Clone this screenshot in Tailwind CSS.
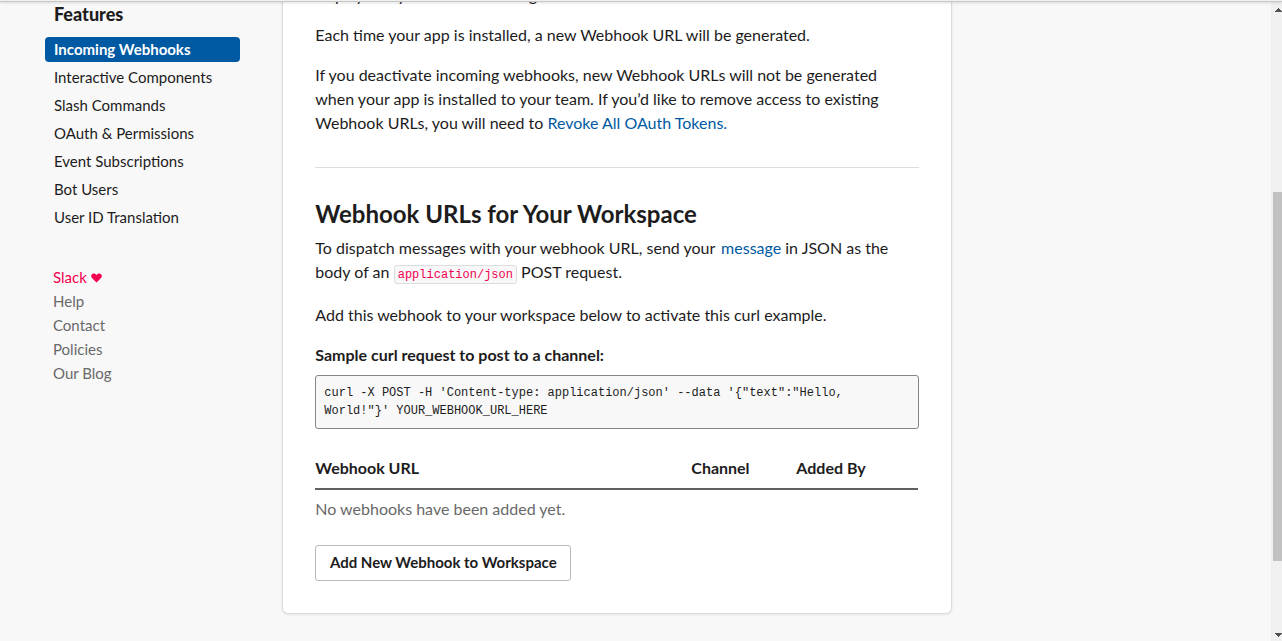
<!DOCTYPE html>
<html lang="en">
<head>
<meta charset="utf-8">
<title>Incoming Webhooks</title>
<script src="https://cdn.jsdelivr.net/npm/@tailwindcss/browser@4"></script>
</head>
<body class="relative h-[641px] w-[1282px] overflow-hidden bg-[#f8f8f8] font-['Lato',sans-serif] text-[15px] leading-6 text-[#1d1c1d]">
<div class="flex h-full">
  <aside class="w-[282px] shrink-0 pl-[45px]">
    <h2 class="mt-[2px] pl-[9px] text-lg leading-6 font-black">Features</h2>
    <nav class="mt-[11px] flex w-[195px] flex-col gap-[3px] leading-[25px]">
      <a class="h-[25px] rounded bg-[#005aa3] pl-[9px] font-bold text-white">Incoming Webhooks</a>
      <a class="h-[25px] pl-[9px]">Interactive Components</a>
      <a class="h-[25px] pl-[9px]">Slash Commands</a>
      <a class="h-[25px] pl-[9px]">OAuth &amp; Permissions</a>
      <a class="h-[25px] pl-[9px]">Event Subscriptions</a>
      <a class="h-[25px] pl-[9px]">Bot Users</a>
      <a class="h-[25px] pl-[9px]">User ID Translation</a>
    </nav>
    <ul class="mt-[35px] pl-2 text-[#696969]">
      <li class="flex items-center gap-1 text-[#f2004f]">Slack
        <svg class="mt-px h-[10px] w-[11px]" viewBox="0 0 11 10" fill="currentColor"><path d="M5.5 9.5 1 5C-.2 3.700 0 1.800 1.200 1 2.600 0 4.500.4 5.500 2 6.500.4 8.400 0 9.800 1 11 1.800 11.200 3.700 10 5Z"/></svg>
      </li>
      <li>Help</li><li>Contact</li><li>Policies</li><li>Our Blog</li>
    </ul>
  </aside>
  <main class="h-[614px] w-[670px] shrink-0 rounded-b-md border border-t-0 border-[#dcdcdc] bg-white pr-8 pl-[32.3px] text-[16px] shadow-[0_1px_3px_rgba(0,0,0,0.08)]">
    <p class="-mt-[17px]">display richly-formatted messages.</p>
    <p class="mt-4">Each time your app is installed, a new Webhook URL will be generated.</p>
    <p class="mt-4">If you deactivate incoming webhooks, new Webhook URLs will not be generated<br>when your app is installed to your team. If you’d like to remove access to existing<br>Webhook URLs, you will need to <a class="text-[#005aa3]">Revoke All OAuth Tokens.</a></p>
    <hr class="mt-8 border-[#dddddd]">
    <h2 class="mt-[31px] text-2xl leading-[30px] font-bold">Webhook URLs for Your Workspace</h2>
    <p class="mt-[7px]">To dispatch messages with your webhook URL, send your <a class="ml-[2px] text-[#005aa3]">message</a> in JSON as the<br>body of an <code class="ml-[0.2px] rounded-[3px] border border-[#dddddd] bg-[#f8f8f8] px-[3px] pt-[2px] pb-px font-['Liberation_Mono',monospace] text-[12px] text-[#f2004f]">application/json</code> POST request.</p>
    <p class="mt-4">Add this webhook to your workspace below to activate this curl example.</p>
    <p class="mt-4 font-bold">Sample curl request to post to a channel:</p>
    <pre class="mt-2 h-[54px] w-[603.6px] rounded-[3px] border border-[#868686] bg-[#f8f8f8] px-2 pt-2 font-['Liberation_Mono',monospace] text-[12px] leading-[18px]">curl -X POST -H 'Content-type: application/json' --data '{"text":"Hello,
World!"}' YOUR_WEBHOOK_URL_HERE</pre>
    <div class="mt-[27px] flex w-[603px] border-b-2 border-[#616061] pb-[8px] font-bold">
      <div class="w-[376px]">Webhook URL</div><div class="w-[105px]">Channel</div><div>Added By</div>
    </div>
    <p class="mt-[7px] text-[#696969]">No webhooks have been added yet.</p>
    <button class="mt-6 block h-9 w-[256px] rounded-[3px] border border-[#b9b9b9] bg-white pb-[2px] text-[15px] font-bold">Add New Webhook to Workspace</button>
  </main>
</div>
<div class="absolute top-0 right-0 flex h-full w-[11px] flex-col bg-[#f0f0f0] pl-[2px]">
  <svg class="mt-[8px] ml-[2px] h-[4px] w-[7px] shrink-0" viewBox="0 0 7 4" fill="#505050" shape-rendering="crispEdges"><path d="M3 0h1v1h1v1h1v1h1v1H0V3h1V2h1V1h1z"/></svg>
  <div class="mt-[180px] h-[369px] bg-[#c1c1c1]"></div>
  <svg class="mt-[72px] h-[4px] w-[7px] shrink-0 ml-[2px]" viewBox="0 0 7 4" fill="#505050" shape-rendering="crispEdges"><path d="M0 0h7v1H6v1H5v1H4v1H3V3H2V2H1V1H0z"/></svg>
</div>
<div class="absolute top-0 left-0 h-[2px] w-full border-b border-[#c8c8c8] bg-[#f2f1f0] shadow-[0_1px_3px_rgba(0,0,0,0.15)]"></div>
</body>
</html>
